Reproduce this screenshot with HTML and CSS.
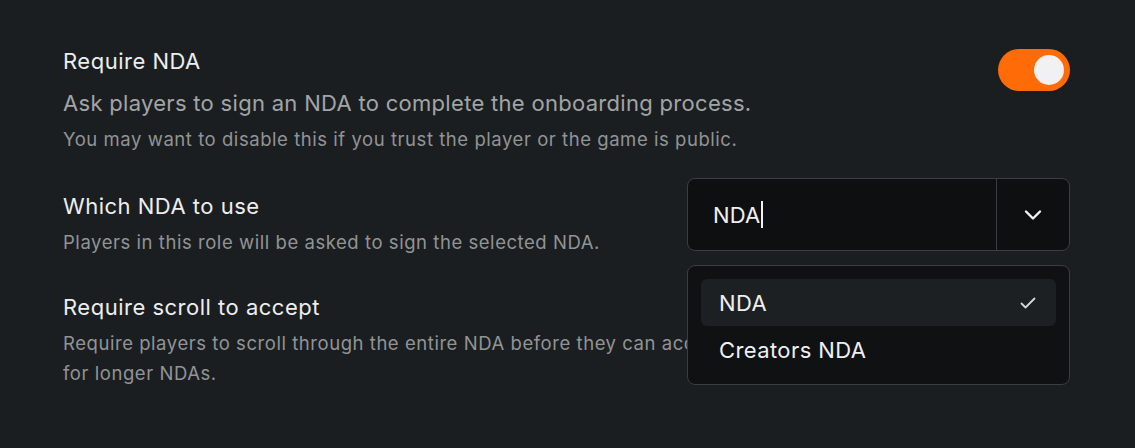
FILE: index.html
```html
<!DOCTYPE html>
<html lang="en">
<head>
    <meta charset="UTF-8">
    <meta name="viewport" content="width=device-width, initial-scale=1.0">
    <title>NDA settings</title>
    <link rel="stylesheet" href="styles.css">
</head>
<body>
    <div class="settings">
        <div class="setting-row top">
            <div class="setting-text">
                <div class="setting-title">Require NDA</div>
                <div class="setting-desc large">Ask players to sign an NDA to complete the onboarding process.</div>
                <div class="setting-desc note">You may want to disable this if you trust the player or the game is public.</div>
            </div>
            <div class="toggle on first-toggle"><span class="knob"></span></div>
        </div>

        <div class="setting-row select-row">
            <div class="setting-text">
                <div class="setting-title">Which NDA to use</div>
                <div class="setting-desc">Players in this role will be asked to sign the selected NDA.</div>
            </div>
            <div class="select-wrap">
                <div class="select">
                    <div class="select-value">NDA<span class="caret"></span></div>
                    <div class="select-button">
                        <svg width="18" height="12" viewBox="0 0 18 12" fill="none">
                            <path d="M2 2.5 L9 9.5 L16 2.5" stroke="#f2f3f4" stroke-width="2.4" stroke-linecap="round" stroke-linejoin="round"/>
                        </svg>
                    </div>
                </div>
                <div class="menu">
                    <div class="menu-item active">
                        <span>NDA</span>
                        <svg width="16" height="12" viewBox="0 0 16 12" fill="none">
                            <path d="M1.5 6.5 L5.5 10.5 L14.5 1.5" stroke="#d4d6d8" stroke-width="1.8" stroke-linecap="round" stroke-linejoin="round"/>
                        </svg>
                    </div>
                    <div class="menu-item"><span>Creators NDA</span></div>
                </div>
            </div>
        </div>

        <div class="setting-row scroll-row">
            <div class="setting-text">
                <div class="setting-title">Require scroll to accept</div>
                <div class="setting-desc wrap">Require players to scroll through the entire NDA before they can accept it. Recommended for longer NDAs.</div>
            </div>
            <div class="toggle on"><span class="knob"></span></div>
        </div>
    </div>
</body>
</html>
```

FILE: styles.css
```css
:root {
    --bg: #1b1e20;
    --field: #0e0f10;
    --border: #3b3e41;
    --title: #eceeef;
    --muted: #a2a5a7;
    --note: #919496;
    --orange: #ff6b06;
}

html, body {
    min-height: 100%;
}

body {
    margin: 0;
    min-height: 448px;
    background-color: var(--bg);
    font-family: Inter, "Noto Sans", sans-serif;
    color: var(--title);
}

.settings {
    width: 1007px;
    padding: 47px 0 0 63px;
}

.setting-row {
    display: flex;
    justify-content: space-between;
    align-items: flex-start;
}

.setting-title {
    font-size: 22px;
    line-height: 29px;
    letter-spacing: 0.5px;
    color: var(--title);
}

.setting-desc {
    font-size: 18.5px;
    line-height: 26px;
    letter-spacing: 0.55px;
    margin-top: 9px;
    color: var(--note);
}

.setting-desc.large {
    font-size: 22px;
    line-height: 30px;
    letter-spacing: 0.3px;
    margin-top: 12px;
    color: var(--muted);
}

.setting-desc.note {
    margin-top: 8px;
}

.setting-desc.wrap {
    line-height: 30px;
    margin-top: 6px;
    max-width: 845px;
}

.toggle {
    width: 72px;
    height: 42px;
    border-radius: 21px;
    background-color: #3a3d40;
    display: flex;
    align-items: center;
    padding: 0 6px;
    box-sizing: border-box;
    flex-shrink: 0;
}

.toggle.on {
    background-color: var(--orange);
    justify-content: flex-end;
}

.first-toggle {
    margin-top: 2px;
}

.knob {
    width: 30px;
    height: 30px;
    border-radius: 50%;
    background-color: #f1f1f3;
}

.select-row {
    margin-top: 26px;
}

.select-row .setting-text {
    padding-top: 14px;
}

.select-row .setting-desc {
    margin-top: 8px;
}

.select-wrap {
    position: relative;
    width: 383px;
    flex-shrink: 0;
}

.select {
    display: flex;
    height: 73px;
    box-sizing: border-box;
    border: 1px solid var(--border);
    border-radius: 8px;
    background-color: var(--field);
}

.select-value {
    flex: 1;
    display: flex;
    align-items: center;
    padding-left: 25px;
    font-size: 22px;
    letter-spacing: 0.2px;
    color: #f0f1f2;
}

.caret {
    display: inline-block;
    width: 2px;
    height: 27px;
    margin-left: 1px;
    background-color: #f0f1f2;
}

.select-button {
    width: 72px;
    border-left: 1px solid var(--border);
    display: flex;
    align-items: center;
    justify-content: center;
}

.menu {
    position: absolute;
    top: 87px;
    left: 0;
    right: 0;
    z-index: 2;
    box-sizing: border-box;
    height: 120px;
    padding: 13px 13px;
    border: 1px solid var(--border);
    border-radius: 8px;
    background-color: #0f1112;
}

.menu-item {
    display: flex;
    align-items: center;
    justify-content: space-between;
    height: 47px;
    padding: 0 20px 0 18px;
    border-radius: 6px;
    font-size: 22px;
    letter-spacing: 0.4px;
    color: #eef0f1;
}

.menu-item.active {
    background-color: #1d2022;
}

.scroll-row {
    margin-top: 38px;
    align-items: center;
}
```
